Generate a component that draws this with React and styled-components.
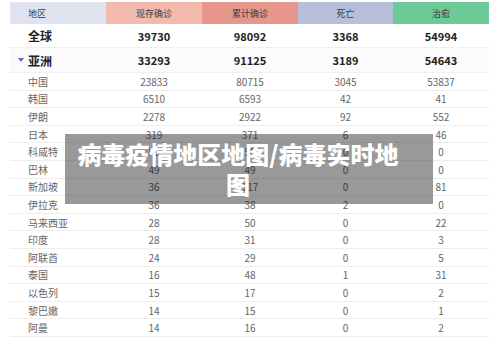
import styled, {createGlobalStyle} from "styled-components";

const GlobalStyle = createGlobalStyle`
  body {
    margin: 0;
    background: #ffffff;
    font-family: "Noto Sans CJK SC", "Noto Sans", sans-serif;
    overflow: hidden;
  }
`;

const headers = [
  {label: "地区", bg: "#dfe3f0"},
  {label: "现存确诊", bg: "#f2b9ad"},
  {label: "累计确诊", bg: "#e6968b"},
  {label: "死亡", bg: "#b5c0d8"},
  {label: "治愈", bg: "#6ecb98"},
];

const summary = [
  {name: "全球", values: [39730, 98092, 3368, 54994]},
  {name: "亚洲", values: [33293, 91125, 3189, 54643], open: true},
];

const countries = [
  ["中国", 23833, 80715, 3045, 53837],
  ["韩国", 6510, 6593, 42, 41],
  ["伊朗", 2278, 2922, 92, 552],
  ["日本", 319, 371, 6, 46],
  ["科威特", 56, 56, 0, 0],
  ["巴林", 49, 49, 0, 0],
  ["新加坡", 36, 117, 0, 81],
  ["伊拉克", 36, 38, 2, 0],
  ["马来西亚", 28, 50, 0, 22],
  ["印度", 28, 31, 0, 3],
  ["阿联酋", 24, 29, 0, 5],
  ["泰国", 16, 48, 1, 31],
  ["以色列", 15, 17, 0, 2],
  ["黎巴嫩", 14, 15, 0, 1],
  ["阿曼", 14, 16, 0, 2],
];

export default function App() {
  return (
    <Page>
      <GlobalStyle />
      <Table>
        <HeaderRow>
          {headers.map((h, i) => (
            <HeaderCell key={h.label} $bg={h.bg} $first={i === 0}>
              {h.label}
            </HeaderCell>
          ))}
        </HeaderRow>
        {summary.map((row) => (
          <SummaryRow key={row.name} $shaded={row.open}>
            <NameCell $bold>
              {row.open && <Caret />}
              {row.name}
            </NameCell>
            {row.values.map((v, i) => (
              <NumCell key={i} $bold>
                {v}
              </NumCell>
            ))}
          </SummaryRow>
        ))}
        {countries.map(([name, ...values]) => (
          <Row key={name}>
            <NameCell>{name}</NameCell>
            {values.map((v, i) => (
              <NumCell key={i}>{v}</NumCell>
            ))}
          </Row>
        ))}
      </Table>
      <Banner>
        <BannerText>病毒疫情地区地图/病毒实时地图</BannerText>
      </Banner>
    </Page>
  );
}

const Page = styled.div`
  position: relative;
  width: 500px;
  height: 339px;
  overflow: hidden;
  padding-top: 2px;
  box-sizing: border-box;
`;

const Table = styled.div`
  width: 479px;
  margin-left: 10px;
`;

const cols = "96px 96px 96px 95px 96px";

const HeaderRow = styled.div`
  display: grid;
  grid-template-columns: ${cols};
  height: 22px;
`;

const HeaderCell = styled.div`
  background: ${(p) => p.$bg};
  display: flex;
  align-items: center;
  justify-content: ${(p) => (p.$first ? "flex-start" : "center")};
  padding-left: ${(p) => (p.$first ? "18px" : "0")};
  font-size: 9px;
  color: #3a3a3a;
`;

const SummaryRow = styled.div`
  display: grid;
  grid-template-columns: ${cols};
  height: ${(p) => (p.$shaded ? "25px" : "24px")};
  background: ${(p) => (p.$shaded ? "#fbfbfb" : "#ffffff")};
  border-bottom: 1px solid #f0f0f0;
  box-sizing: border-box;
`;

const Row = styled.div`
  display: grid;
  grid-template-columns: ${cols};
  height: 17.6px;
  border-bottom: 1px solid #eeeeee;
  box-sizing: border-box;
`;

const NameCell = styled.div`
  position: relative;
  display: flex;
  align-items: center;
  padding-left: 18px;
  font-size: ${(p) => (p.$bold ? "12px" : "10px")};
  font-weight: ${(p) => (p.$bold ? 700 : 400)};
  color: ${(p) => (p.$bold ? "#222" : "#666")};
`;

const NumCell = styled.div`
  display: flex;
  align-items: center;
  justify-content: center;
  font-size: ${(p) => (p.$bold ? "11px" : "10px")};
  font-weight: ${(p) => (p.$bold ? 700 : 400)};
  color: ${(p) => (p.$bold ? "#222" : "#666")};
`;

const Caret = styled.span`
  position: absolute;
  left: 8px;
  top: 50%;
  margin-top: -2px;
  width: 0;
  height: 0;
  border-left: 3px solid transparent;
  border-right: 3px solid transparent;
  border-top: 4px solid #4a6fd0;
`;

const Banner = styled.div`
  position: absolute;
  left: 65px;
  top: 134px;
  width: 368px;
  height: 70px;
  box-sizing: border-box;
  padding: 5px 30px 5px 8px;
  background: rgba(0, 0, 0, 0.4);
`;

const BannerText = styled.div`
  color: #ffffff;
  font-size: 24px;
  line-height: 30px;
  font-weight: 900;
  text-align: center;
`;
